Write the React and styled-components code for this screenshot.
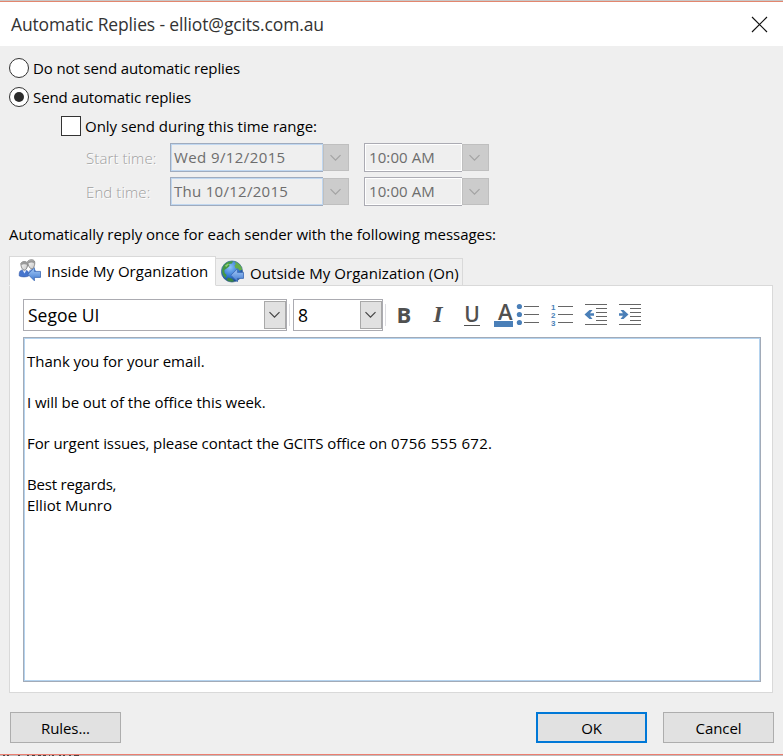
import React from 'react'
import styled, { createGlobalStyle } from 'styled-components'

const GlobalStyle = createGlobalStyle`
  * { box-sizing: border-box; }
  body {
    margin: 0;
    overflow: hidden;
    background: #efefef;
    font-family: 'Open Sans', 'Noto Sans', sans-serif;
    font-size: 15px;
    line-height: 20px;
    color: #000;
  }
`

// ##########       Toolbar drawings
const BulletIcon = () => (
  <Glyph viewBox="0 0 22 22">
    {[2.5, 10.5, 18.5].map(y => (
      <g key={y}>
        <circle cx="2.4" cy={y} r="2.6" fill="#4a7fb8" />
        <path d={`M7 ${y}h15`} stroke="#666" />
      </g>
    ))}
  </Glyph>
)

const NumberIcon = () => (
  <Glyph viewBox="0 0 22 22">
    {[2.5, 10.5, 18.5].map((y, i) => (
      <g key={y}>
        <Digit x="0" y={y + 3.2}>{i + 1}</Digit>
        <path d={`M7 ${y}h15`} stroke="#666" />
      </g>
    ))}
  </Glyph>
)

const IndentIcon = ({ right }) => (
  <Glyph viewBox="0 0 22 22">
    <path d="M0 .5h22M11 4.5h11M11 8.5h11M11 12.5h11M11 16.5h11M0 20.5h22" stroke="#666" />
    <path
      d="M-.5 10.500L4.500 6h3L5 9.200h4v2.600H5L7.500 15h-3z"
      fill="#4a7fb8"
      transform={right ? 'translate(9 0) scale(-1 1)' : undefined}
    />
  </Glyph>
)

const Chevron = ({ color = '#444' }) => (
  <svg width="12" height="8" viewBox="0 0 12 8" fill="none">
    <path d="M.5 1.200l5 5 5-5" stroke={color} strokeWidth="1.200" />
  </svg>
)

const BlueArrow = () => (
  <path
    d="M9.800 15.200l6.600-6.400v3.600h6.100v6h-6.100v3.400z"
    fill="url(#arrowBlue)"
    stroke="#3c68b4"
    strokeWidth=".8"
  />
)

const PeopleIcon = () => (
  <TabIcon viewBox="0 0 24 24">
    <defs>
      <linearGradient id="arrowBlue" x1="0" y1="0" x2="0" y2="1">
        <stop offset="0" stopColor="#a9cdf8" />
        <stop offset="1" stopColor="#3d78d0" />
      </linearGradient>
      <linearGradient id="face" x1="0" y1="0" x2="1" y2="1">
        <stop offset="0" stopColor="#ffffff" />
        <stop offset="1" stopColor="#c4c4c4" />
      </linearGradient>
    </defs>
    <path d="M10 16c0-4 2-6 5-6s3 2 3 4z" fill="#6f98dd" />
    <path d="M9.600 2.600C10.600.5 15.200.2 16.400 2c1 2-.2 7.600-2.400 7.900-2.600 0-4.200-4.500-4.400-7.300z" fill="url(#face)" stroke="#7b7b7b" strokeWidth=".9" />
    <path d="M9.600 3c1-2 5.600-2.500 6.800-.8l-.4 2c-1-1-4-1-5.600.3z" fill="#999" />
    <path d="M1.300 17C.9 13 2 11.200 4.500 11h3c2.500.2 3.500 3 3.200 6-3 1.200-6.500 1.200-9.400 0z" fill="#4675cd" stroke="#3156a5" strokeWidth=".6" />
    <path d="M4.500 11l2 3.500 2-3.500z" fill="#dce8ff" />
    <path d="M2.800 4.500C3.800 2.200 8 2 9.200 3.800c.9 2.200-.3 7-2.600 7.400-2.500 0-3.700-4-3.800-6.700z" fill="url(#face)" stroke="#7b7b7b" strokeWidth=".9" />
    <path d="M2.800 5c.8-2.600 5.200-3.200 6.400-1.200L9 5.800C7.600 4.900 5 4.900 3.500 6.300z" fill="#999" />
    <BlueArrow />
  </TabIcon>
)

const GlobeIcon = () => (
  <TabIcon viewBox="0 0 24 24">
    <defs>
      <radialGradient id="sea" cx=".4" cy=".3" r=".75">
        <stop offset="0" stopColor="#8fc4f8" />
        <stop offset=".55" stopColor="#3379d4" />
        <stop offset="1" stopColor="#12397f" />
      </radialGradient>
    </defs>
    <circle cx="11" cy="11.500" r="10.600" fill="url(#sea)" stroke="#285a86" strokeWidth=".6" />
    <path d="M2 6.500C4 2.500 8 .9 12 1.200l-1 2.300-3 .5.600 2-3 2.500-2.200 1.500.2 3 2 2-.7 3C1.500 16 0 11 2 6.500z" fill="#439844" />
    <path d="M13.500 1.500c4 1 7 4.300 7.800 8l-2.600 1.200-1.700-2-2.600-.5-.9-2.800 1.400-1.500z" fill="#64ad4c" />
    <path d="M7 17.500l4 1.200 2.200 2.600c-2.600.8-5.500.2-7.500-1.300z" fill="#3b8640" />
    <path d="M4 5.500l3-2 1 .8-3 3z" fill="#92ce72" />
    <BlueArrow />
  </TabIcon>
)

const CloseIcon = () => (
  <svg width="17" height="17" viewBox="0 0 17 17">
    <path d="M1 1l15 15M16 1L1 16" stroke="#111" strokeWidth="1.150" />
  </svg>
)

// tops of the letters of the window underneath
const marks = [[3, 2], [7, 2], [18, 2], [27, 2], [32, 3], [38, 3], [43, 3], [49, 1], [52, 2], [59, 2], [63, 2], [69, 2], [74, 5]]

const ranges = [
  { label: 'Start time:', date: 'Wed 9/12/2015', time: '10:00 AM', track: 0.4 },
  { label: 'End time:', date: 'Thu 10/12/2015', time: '10:00 AM', track: 0.28 },
]

const App = () => (
  <Dialog>
    <GlobalStyle />
    <TitleBar>
      <Title>Automatic Replies - elliot@gcits.com.au</Title>
      <CloseIcon />
    </TitleBar>

    <Options>
      <Option>
        <Radio />
        <Text $track={-0.11}>Do not send automatic replies</Text>
      </Option>
      <Option>
        <Radio $checked />
        <Text $track={-0.09}>Send automatic replies</Text>
      </Option>
      <Option $nested>
        <Checkbox />
        <Text $track={-0.01}>Only send during this time range:</Text>
      </Option>
      <Ranges>
        {ranges.map(r => (
          <React.Fragment key={r.label}>
            <RangeLabel>{r.label}</RangeLabel>
            <Picker>
              <PickerValue $blue $track={r.track}>{r.date}</PickerValue>
              <PickerButton $narrow><Chevron color="#a3a3a3" /></PickerButton>
            </Picker>
            <Picker>
              <PickerValue $track={0.1}>{r.time}</PickerValue>
              <PickerButton><Chevron color="#a3a3a3" /></PickerButton>
            </Picker>
          </React.Fragment>
        ))}
      </Ranges>
    </Options>

    <Intro>Automatically reply once for each sender with the following messages:</Intro>

    <Tabs>
      <Tab $active>
        <PeopleIcon />
        <Text $track={0.02}>Inside My Organization</Text>
      </Tab>
      <Tab>
        <GlobeIcon />
        <Text $track={0.06}>Outside My Organization (On)</Text>
      </Tab>
    </Tabs>

    <Panel>
      <Toolbar>
        <Select $width={264}>
          Segoe UI
          <SelectButton><Chevron /></SelectButton>
        </Select>
        <Divider />
        <Select $width={90}>
          8
          <SelectButton><Chevron /></SelectButton>
        </Select>
        <Divider />
        <Format>B</Format>
        <Format $italic>I</Format>
        <Format><Underlined>U</Underlined></Format>
        <FontColor>A</FontColor>
        <Lists>
          <BulletIcon />
          <NumberIcon />
          <IndentIcon />
          <IndentIcon right />
        </Lists>
      </Toolbar>
      <Editor>
        <Line $track={-0.03}>Thank you for your email.</Line>
        <Line $track={-0.06}>I will be out of the office this week.</Line>
        <Line $track={-0.09}>
          For urgent issues, please contact the GCITS office on <Text $track={0.3}>0756 555 672.</Text>
        </Line>
        <Line $tight $track={-0.2}>Best regards,</Line>
        <Line>Elliot Munro</Line>
      </Editor>
    </Panel>

    <Footer>
      <Button>Rules...</Button>
      <Actions>
        <Button $primary>OK</Button>
        <Button>Cancel</Button>
      </Actions>
    </Footer>
    <Behind>
      <svg width="90" height="1">
        {marks.map(([x, w]) => <rect key={x} x={x} width={w} height="1" fill="#4b4444" />)}
      </svg>
    </Behind>
  </Dialog>
)

// ##########       Window
const Dialog = styled.div`
  display: flex;
  flex-direction: column;
  width: 783px;
  height: 756px;
  overflow: hidden;
  background: #efefef;
  border-top: 1px solid #c8c8c8;
`

const TitleBar = styled.header`
  display: flex;
  align-items: center;
  justify-content: space-between;
  height: 45px;
  flex: none;
  padding: 0 15px 0 11px;
  background: #fff;
  border-top: 1px solid #e3866e;
`

const Title = styled.div`
  font-size: 17.5px;
  line-height: 24px;
  letter-spacing: -0.14px;
  color: #333;
`

const Text = styled.span`
  letter-spacing: ${p => p.$track || 0}px;
  white-space: nowrap;
`

// ##########       Options
const Options = styled.div`
  padding: 7px 9px 0;
`

const Option = styled.label`
  display: flex;
  align-items: center;
  gap: 4px;
  height: 29px;
  padding-left: ${p => (p.$nested ? 52 : 0)}px;
`

const Radio = styled.span`
  display: grid;
  place-items: center;
  width: 20px;
  height: 20px;
  border: 1px solid #333;
  border-radius: 50%;
  background: #fff;

  &::after {
    content: '';
    width: 10px;
    height: 10px;
    border-radius: 50%;
    background: ${p => (p.$checked ? '#2b2b2b' : 'transparent')};
  }
`

const Checkbox = styled.span`
  width: 20px;
  height: 20px;
  border: 1px solid #333;
  background: #fff;
`

const Ranges = styled.div`
  display: grid;
  grid-template-columns: 84px 179px 125px;
  grid-auto-rows: 29px;
  row-gap: 5px;
  margin: 3px 0 0 77px;
`

const RangeLabel = styled.span`
  align-self: center;
  font-weight: 300;
  letter-spacing: 0.1px;
  color: #a0a0a0;
  text-shadow: 1px 1px 0 #fff;
`

const Picker = styled.div`
  display: flex;
  align-items: center;

  &:nth-child(3n) {
    margin-left: 15px;
    margin-right: -15px;
  }
`

const PickerValue = styled.div`
  flex: 1;
  height: 29px;
  padding: 3px 0 0 ${p => (p.$blue ? 3 : 4)}px;
  border: 1px solid ${p => (p.$blue ? '#9fabbe' : '#ababb3')};
  border-right-width: 0;
  box-shadow: inset 0 0 0 1px ${p => (p.$blue ? '#c0d7f0' : '#fff')};
  letter-spacing: ${p => p.$track}px;
  color: #6d6d6d;
`

const PickerButton = styled.div`
  display: grid;
  place-items: center;
  width: ${p => (p.$narrow ? 26 : 27)}px;
  height: 27px;
  padding-right: 1px;
  border: 1px solid #bfbfbf;
  background: #ccc;
`

const Intro = styled.div`
  height: 50px;
  padding: 18px 9px 0;
  letter-spacing: -0.04px;
  white-space: nowrap;
`

// ##########       Tabs
const Tabs = styled.div`
  display: flex;
  align-items: flex-end;
  height: 30px;
  margin: 0 0 -1px 9px;
  z-index: 1;
`

const Tab = styled.div`
  display: flex;
  align-items: center;
  gap: 5px;
  width: ${p => (p.$active ? 207 : 247)}px;
  height: ${p => (p.$active ? 30 : 28)}px;
  padding-left: ${p => (p.$active ? 8 : 5)}px;
  border: 1px solid #d9d9d9;
  border-bottom-color: ${p => (p.$active ? '#fff' : '#d9d9d9')};
  border-left-width: ${p => (p.$active ? 1 : 0)}px;
  background: ${p => (p.$active ? '#fff' : '#efefef')};

  ${Text} {
    padding-top: ${p => (p.$active ? 0 : 2)}px;
  }
`

const TabIcon = styled.svg`
  flex: none;
  width: 24px;
  height: 24px;
`

const Panel = styled.div`
  display: flex;
  flex-direction: column;
  gap: 6px;
  height: 408px;
  flex: none;
  margin: 0 10px 0 9px;
  padding: 13px 11px 10px 13px;
  border: 1px solid #d9d9d9;
  background: #fff;
`

const Toolbar = styled.div`
  display: flex;
  align-items: center;
  height: 32px;
`

const Select = styled.div`
  display: flex;
  align-items: center;
  justify-content: space-between;
  width: ${p => p.$width}px;
  height: 32px;
  padding: 1px 0 1px 4px;
  border: 1px solid #ababb1;
  font-size: 17.5px;
`

const SelectButton = styled.div`
  display: grid;
  place-items: center;
  width: 22px;
  height: 28px;
  padding-right: 1px;
  border: 1px solid #a9a9a9;
  background: #e1e1e1;
`

const Divider = styled.div`
  width: 1px;
  height: 22px;
  margin: 0 3px 0 2px;
  background: #dcdce0;

  &:nth-child(4) {
    margin-right: 1px;
  }
`

const Format = styled.div`
  width: 34px;
  padding-bottom: 2px;
  text-align: center;
  font-family: ${p => (p.$italic ? "'Liberation Serif', serif" : "'Open Sans', sans-serif")};
  font-style: ${p => (p.$italic ? 'italic' : 'normal')};
  font-size: ${p => (p.$italic ? 24 : 22)}px;
  font-weight: 700;
  color: #505050;
`

const Underlined = styled.span`
  display: inline-block;
  height: 20px;
  border-bottom: 1px solid #505050;
  font-size: 21px;
  font-weight: 600;
  line-height: 17px;
`

const FontColor = styled.div`
  width: 19px;
  height: 24px;
  margin: 0 4px 0 5px;
  border-bottom: 6px solid #4a7fb8;
  padding-left: 4px;
  font-size: 22px;
  font-weight: 600;
  line-height: 17px;
  color: #505050;
`

const Lists = styled.div`
  display: flex;
  gap: 12px;
`

const Glyph = styled.svg`
  width: 22px;
  height: 22px;
  overflow: visible;
`

const Digit = styled.text`
  font: 700 8px 'Liberation Sans', sans-serif;
  fill: #4a7fb8;
`

const Editor = styled.div`
  flex: 1;
  padding: 13px 3px;
  border: 1px solid #a2abb8;
  box-shadow: inset 0 0 0 1px #b4d3ef;
`

const Line = styled.p`
  margin: 0 0 ${p => (p.$tight ? 0 : 20)}px;
  line-height: 21px;
  letter-spacing: ${p => p.$track || 0}px;
`

// ##########       Buttons
const Footer = styled.div`
  display: flex;
  justify-content: space-between;
  height: 61px;
  flex: none;
  padding: 19px 9px 0 10px;
`

const Actions = styled.div`
  display: flex;
  gap: 16px;
`

const Button = styled.button`
  width: 111px;
  height: 31px;
  padding: 0;
  border: ${p => (p.$primary ? '2px solid #0078d7' : '1px solid #adadad')};
  background: #e1e1e1;
  font: inherit;
  letter-spacing: -0.1px;
  color: #000;
`

const Behind = styled.div`
  height: 2px;
  flex: none;
  border-top: 1px solid #ec7e70;
  background: #c0bcbc;

  svg {
    display: block;
  }
`

export default App;
